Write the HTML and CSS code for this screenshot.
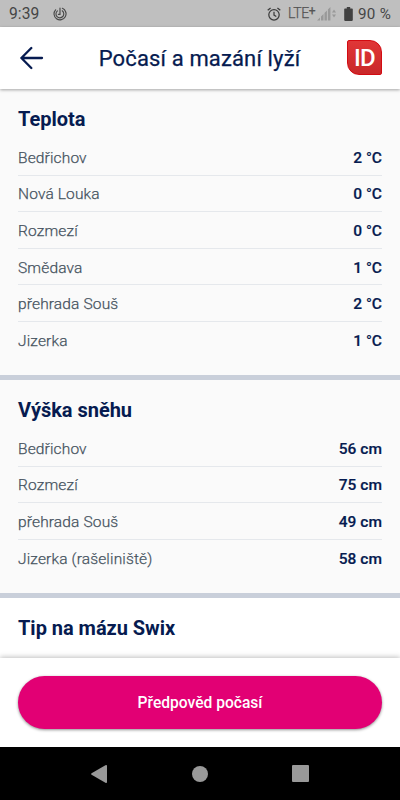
FILE: index.html
```html
<!DOCTYPE html>
<html lang="cs">
<head>
<meta charset="utf-8">
<title>Počasí a mazání lyží</title>
<link rel="stylesheet" href="styles.css">
</head>
<body>
<div class="screen">
  <div class="status">
    <span class="clock">9:39</span>
    <svg class="spiral" width="14" height="14" viewBox="0 0 14 14" fill="none" stroke="#484848" stroke-width="1.15" stroke-linecap="round">
      <path d="M2.6 2.8A6 6 0 1 0 9.4 1.3M4.4 3.9A3.9 3.9 0 1 0 9.2 3.8M7 1V7.4H5.4M11.7 3.2A6 6 0 0 1 12.9 6"/>
    </svg>
    <svg class="alarm" width="14" height="14" viewBox="0 0 14 14" fill="none" stroke="#3c3c3c" stroke-width="1.25">
      <circle cx="7" cy="7.8" r="5.2"/><path d="M7 4.7v3.4l2.3 1.4M.7 3.3 3.6.9M13.3 3.3 10.4.9"/>
    </svg>
    <span class="lte">LTE<b>+</b></span>
    <svg class="signal" width="20" height="14" viewBox="0 0 20 14" fill="#999">
      <path d="M0 13.5 3 10.5V13.5zM4 9.5 6.5 7V13.5H4zM7.5 6 9.9 3.6V13.5H7.5zM10.9 2.6 13.4.1V13.5H10.9zM15 5.6 17 2.4 19 5.6zM15 7.4H19L17 10.6z"/>
    </svg>
    <svg class="battery" width="9" height="14" viewBox="0 0 9 14" fill="#414141"><path d="M2.8 0h3.4v1.4H8q.8 0 .8.8v10.9q0 .8-.8.8H1q-.8 0-.8-.8V2.2q0-.8.8-.8h1.8z"/></svg>
    <span class="percent">90 %</span>
  </div>
  <header class="appbar">
    <svg class="back" width="24" height="24" viewBox="0 0 24 24" fill="none" stroke="#061b50" stroke-width="2.3" stroke-linecap="round" stroke-linejoin="round"><path d="M22 12H1.4M11.3 2 1.4 12 11.3 22"/></svg>
    <h1>Počasí a mazání lyží</h1>
    <div class="logo">ID</div>
  </header>
  <main>
    <section>
      <h2>Teplota</h2>
      <ul>
        <li><span>Bedřichov</span><b>2 °C</b></li>
        <li><span>Nová Louka</span><b>0 °C</b></li>
        <li><span>Rozmezí</span><b>0 °C</b></li>
        <li><span>Smědava</span><b>1 °C</b></li>
        <li><span>přehrada Souš</span><b>2 °C</b></li>
        <li><span>Jizerka</span><b>1 °C</b></li>
      </ul>
    </section>
    <section class="snow">
      <h2>Výška sněhu</h2>
      <ul>
        <li><span>Bedřichov</span><b>56 cm</b></li>
        <li><span>Rozmezí</span><b>75 cm</b></li>
        <li><span>přehrada Souš</span><b>49 cm</b></li>
        <li><span>Jizerka (rašeliniště)</span><b>58 cm</b></li>
      </ul>
    </section>
    <section class="tip">
      <h2>Tip na mázu Swix</h2>
    </section>
  </main>
  <footer><button>Předpověd počasí</button></footer>
  <nav>
    <svg width="18" height="20" viewBox="0 0 18 20" fill="#999"><path d="M15.4 1.2Q17 .4 17 2V18Q17 19.6 15.4 18.8L1.6 10.8Q.4 10 1.6 9.2z"/></svg>
    <i class="home"></i>
    <i class="recent"></i>
  </nav>
</div>
</body>
</html>
```
FILE: styles.css
```css
* { box-sizing: border-box; }
body { margin: 0; font-family: Roboto, "Noto Sans", sans-serif; background: #fff; }
.screen { width: 400px; height: 800px; display: flex; flex-direction: column; overflow: hidden; }

.status { height: 26.5px; flex: none; background: #bfbfbf; display: flex; align-items: center; padding: 1px 9px 0; color: #454545; font-size: 15.6px; }
.clock { width: 44px; padding-top: 1px; letter-spacing: .1px; }
.alarm { margin-left: auto; margin-right: 7px; }
.lte { display: flex; align-items: flex-start; width: 29px; font-size: 14px; line-height: 17px; letter-spacing: -.35px; color: #555; font-weight: 300; -webkit-text-stroke: .25px #555; }
.lte b { font-size: 12px; line-height: 13px; font-weight: 400; }
.signal { margin-right: 7px; }
.battery { margin-right: 5px; }
.percent { width: 33px; white-space: nowrap; font-size: 15.2px; letter-spacing: .3px; }

.appbar { position: relative; z-index: 1; height: 62.5px; flex: none; display: flex; align-items: center; padding: 0 18px 0 20px; background: #fff; box-shadow: 0 1px 3px rgba(0, 0, 0, .35); }
.back { flex: none; }
h1 { flex: 1; margin: 0; padding: 2px 0 0 8px; text-align: center; font-size: 22px; line-height: 30px; font-weight: 400; letter-spacing: .14px; -webkit-text-stroke: .25px #061b50; color: #061b50; white-space: nowrap; }
.logo { width: 35px; height: 35px; border: 1px solid #d30b12; border-radius: 2px 12px 2px 12px; background: linear-gradient(#e03637, #c9282a); color: #fff; font-size: 24px; font-weight: 500; line-height: 35px; text-align: center; letter-spacing: -.8px; }

main { flex: 1; min-height: 0; overflow: hidden; background: #fff; }
section { height: 291px; background: #fafafa; padding: 15px 18px 0; border-bottom: 5px solid #c9cfda; }
.snow { height: 218px; }
.tip { height: 60px; border: 0; background: #fff; }
h2 { margin: 0 0 5px; font-size: 20px; line-height: 30px; font-weight: 700; letter-spacing: -.03px; color: #061b50; }
ul { list-style: none; margin: 0; padding: 0; }
li { height: 36.6px; padding-top: 2px; display: flex; align-items: center; justify-content: space-between; border-bottom: 1px solid #e5e8ec; font-size: 15.5px; color: #465360; }
li:last-child { border-color: transparent; }
li span { font-weight: 300; letter-spacing: .15px; -webkit-text-stroke: .25px #465360; }
li b { font-weight: 500; letter-spacing: .03px; -webkit-text-stroke: .2px #061b50; color: #061b50; }

footer { position: relative; z-index: 1; height: 89px; flex: none; background: #fff; padding: 17.5px 18px; box-shadow: 0 -1px 5px rgba(0, 0, 0, .25); }
button { display: block; width: 100%; height: 53px; padding: 1px 0 0; border: 0; border-radius: 27px; background: #e20074; color: #fff; font: 500 15.6px Roboto, sans-serif; box-shadow: 0 1px 3px rgba(0, 0, 0, .45); }
nav { height: 53px; flex: none; display: grid; grid-template-columns: repeat(3, 100px); justify-content: center; align-items: center; justify-items: center; background: #000; }
nav svg { margin-right: 2px; }
.home { width: 16px; height: 16px; border-radius: 50%; background: #999; }
.recent { width: 17px; height: 17px; border-radius: 1px; background: #999; }
```
